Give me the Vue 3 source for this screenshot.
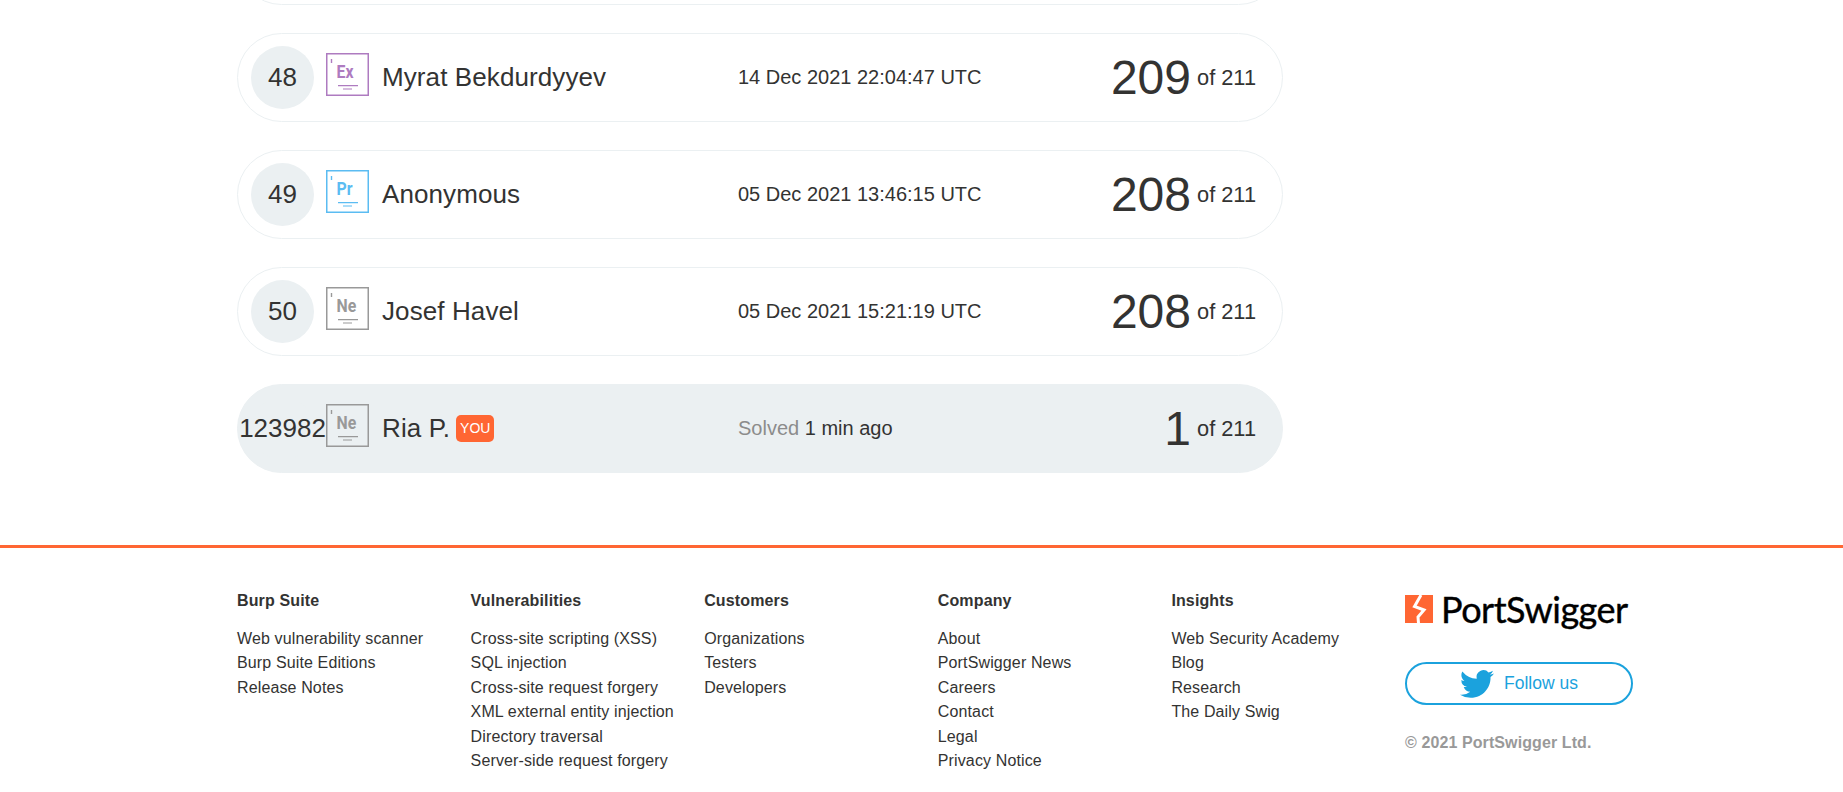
<script setup>
const rows = [
  { rank: 48, name: "Myrat Bekdurdyyev", level: "Ex", tone: "expert", date: "14 Dec 2021 22:04:47 UTC", score: 209 },
  { rank: 49, name: "Anonymous", level: "Pr", tone: "practitioner", date: "05 Dec 2021 13:46:15 UTC", score: 208 },
  { rank: 50, name: "Josef Havel", level: "Ne", tone: "neutral", date: "05 Dec 2021 15:21:19 UTC", score: 208 },
];

const columns = [
  { title: "Burp Suite", links: ["Web vulnerability scanner", "Burp Suite Editions", "Release Notes"] },
  {
    title: "Vulnerabilities",
    links: [
      "Cross-site scripting (XSS)",
      "SQL injection",
      "Cross-site request forgery",
      "XML external entity injection",
      "Directory traversal",
      "Server-side request forgery",
    ],
  },
  { title: "Customers", links: ["Organizations", "Testers", "Developers"] },
  { title: "Company", links: ["About", "PortSwigger News", "Careers", "Contact", "Legal", "Privacy Notice"] },
  { title: "Insights", links: ["Web Security Academy", "Blog", "Research", "The Daily Swig"] },
];
</script>

<template>
  <div class="page">
    <main class="board">
      <div class="cut-off"><div class="row"></div></div>

      <div v-for="row in rows" :key="row.rank" class="row">
        <div class="rank">{{ row.rank }}</div>
        <svg class="level" :class="row.tone" viewBox="0 0 43 43">
          <rect x="0.75" y="0.75" width="41.5" height="41.5" fill="none" stroke="currentColor" stroke-width="1.5" />
          <path d="M5.5 6v4" stroke="currentColor" stroke-width="1.4" />
          <text x="10.5" y="25">{{ row.level }}</text>
          <path d="M12 32.7h20M17 36h9" stroke="currentColor" stroke-width="1.2" />
        </svg>
        <div class="name">{{ row.name }}</div>
        <div class="date">{{ row.date }}</div>
        <div class="score"><strong>{{ row.score }}</strong><span>of 211</span></div>
      </div>

      <div class="row mine">
        <div class="rank">123982</div>
        <svg class="level neutral" viewBox="0 0 43 43">
          <rect x="0.75" y="0.75" width="41.5" height="41.5" fill="none" stroke="currentColor" stroke-width="1.5" />
          <path d="M5.5 6v4" stroke="currentColor" stroke-width="1.4" />
          <text x="10.5" y="25">Ne</text>
          <path d="M12 32.7h20M17 36h9" stroke="currentColor" stroke-width="1.2" />
        </svg>
        <div class="name">Ria P. <span class="you">YOU</span></div>
        <div class="date"><span class="muted">Solved</span> 1 min ago</div>
        <div class="score"><strong>1</strong><span>of 211</span></div>
      </div>
    </main>

    <footer class="footer">
      <div v-for="col in columns" :key="col.title" class="col">
        <h4>{{ col.title }}</h4>
        <a v-for="link in col.links" :key="link" href="javascript:void(0)">{{ link }}</a>
      </div>

      <div class="brand">
        <div class="logo">
          <svg class="mark" viewBox="0 0 28 28">
            <rect width="28" height="28" fill="#ff6633" />
            <path d="M16 0 9.5 11.5 19 15l-6 7 .5 6" fill="none" stroke="#fff" stroke-width="3" />
          </svg>
          <span>PortSwigger</span>
        </div>
        <a class="follow" href="javascript:void(0)">
          <svg viewBox="0 0 24 24" class="bird">
            <path
              d="M23.95 4.57a10 10 0 0 1-2.82.77 4.96 4.96 0 0 0 2.16-2.72 9.9 9.9 0 0 1-3.12 1.18 4.92 4.92 0 0 0-8.38 4.48A13.98 13.98 0 0 1 1.64 3.16a4.82 4.82 0 0 0-.67 2.48 4.92 4.92 0 0 0 2.19 4.1 4.9 4.9 0 0 1-2.23-.62v.06a4.92 4.92 0 0 0 3.95 4.83 5 5 0 0 1-2.21.08 4.94 4.94 0 0 0 4.6 3.42A9.87 9.87 0 0 1 0 19.54a13.94 13.94 0 0 0 7.55 2.21c9.05 0 14-7.5 14-13.98 0-.21 0-.42-.02-.63a9.94 9.94 0 0 0 2.46-2.55z"
              fill="#1ba2dd"
            />
          </svg>
          Follow us
        </a>
        <div class="copyright">© 2021 PortSwigger Ltd.</div>
      </div>
    </footer>
  </div>
</template>

<style>
html,
body {
  margin: 0;
  background: #fff;
  overflow: hidden;
}
</style>

<style scoped>
.page {
  height: 792px;
  overflow: hidden;
  font-family: "Liberation Sans", Arial, sans-serif;
  color: #333332;
}

.board {
  width: 1046px;
  margin-left: 237px;
  display: flex;
  flex-direction: column;
  gap: 28px;
  padding-bottom: 72px;
}

.cut-off {
  height: 5px;
  overflow: hidden;
  display: flex;
  flex-direction: column;
  justify-content: flex-end;
}

.cut-off .row {
  flex-shrink: 0;
}

.row {
  box-sizing: border-box;
  height: 89px;
  display: flex;
  align-items: center;
  padding: 0 26px 0 13px;
  border: 1px solid #ebf0f2;
  border-radius: 45px;
  background: #fff;
}

.row.mine {
  background: #ebf0f2;
}

.rank {
  flex: none;
  width: 63px;
  height: 63px;
  border-radius: 50%;
  background: #ebf0f2;
  display: flex;
  align-items: center;
  justify-content: center;
  font-size: 26px;
  white-space: nowrap;
}

.level {
  flex: none;
  width: 43px;
  height: 43px;
  margin: 0 0 6px 12px;
}

.level text {
  font-family: Roboto, "Liberation Sans", sans-serif;
  font-size: 18px;
  font-weight: 700;
  fill: currentColor;
  transform: scaleX(0.88);
  transform-origin: 10.5px 25px;
}

.level.expert {
  color: #ae7bc0;
}

.level.practitioner {
  color: #5bbcf2;
}

.level.neutral {
  color: #999;
}

.name {
  flex: none;
  width: 356px;
  margin-left: 13px;
  font-size: 26px;
  letter-spacing: 0.1px;
  display: flex;
  align-items: center;
  gap: 6px;
}

.you {
  background: #ff6633;
  color: #fff;
  font-size: 14px;
  letter-spacing: 0;
  line-height: 27px;
  padding: 0 4px;
  border-radius: 5px;
}

.date {
  font-size: 20px;
}

.muted {
  color: #8c8c8c;
}

.score {
  margin-left: auto;
  display: flex;
  align-items: center;
  gap: 6px;
  font-size: 21.8px;
}

.score strong {
  font-size: 48px;
  font-weight: 400;
}

.footer {
  box-sizing: border-box;
  height: 246px;
  border-top: 3px solid #ff6633;
  padding: 41px 0 0 237px;
  display: grid;
  grid-template-columns: repeat(5, 233.6px) 228px;
  align-items: start;
}

.col {
  display: flex;
  flex-direction: column;
  font-size: 16px;
  line-height: 24.4px;
  letter-spacing: 0.13px;
}

.col h4 {
  margin: 0 0 14px;
  font-size: 16px;
  line-height: 24px;
  font-weight: 700;
}

.col a {
  color: #333332;
  text-decoration: none;
  white-space: nowrap;
}

.brand {
  display: flex;
  flex-direction: column;
}

.logo {
  display: flex;
  align-items: center;
  gap: 8px;
  height: 36px;
  margin-top: 2px;
  color: #000;
  font-family: Lato, sans-serif;
  font-size: 36px;
  letter-spacing: -0.5px;
  -webkit-text-stroke: 0.4px #000;
}

.mark {
  flex: none;
  width: 28px;
  height: 28px;
}

.follow {
  box-sizing: border-box;
  height: 43px;
  margin-top: 35px;
  display: flex;
  align-items: center;
  justify-content: center;
  gap: 10px;
  border: 2px solid #1ba2dd;
  border-radius: 22px;
  color: #1ba2dd;
  font-size: 17.5px;
  text-decoration: none;
}

.bird {
  width: 34px;
  height: 34px;
}

.copyright {
  margin-top: 29px;
  font-size: 16px;
  font-weight: 700;
  letter-spacing: 0.1px;
  color: #999;
}
</style>
